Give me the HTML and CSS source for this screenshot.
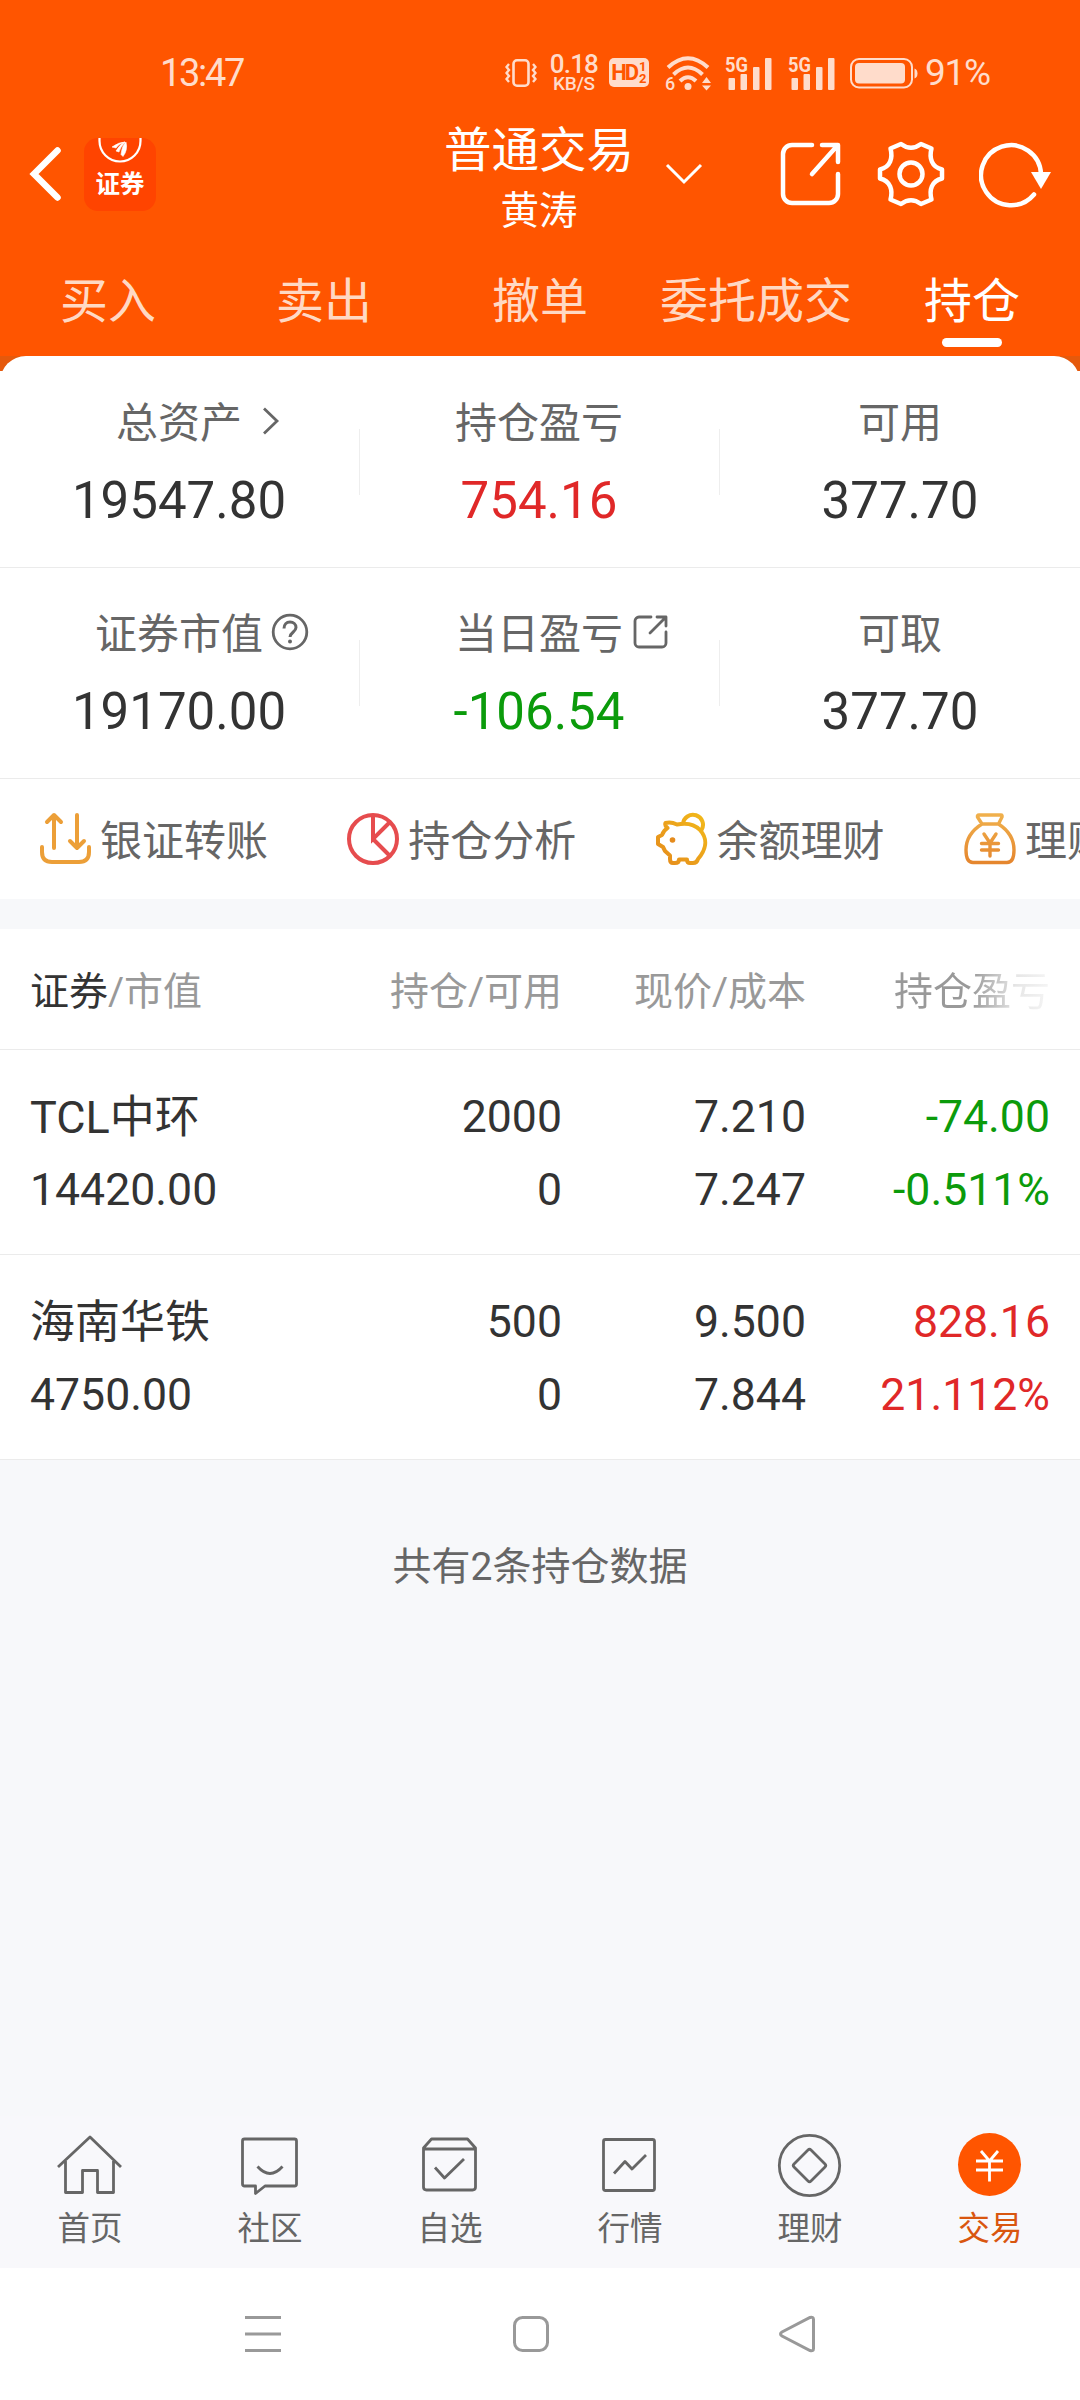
FILE: index.html
```html
<!DOCTYPE html>
<html lang="zh-CN">
<head>
<meta charset="utf-8">
<title>普通交易 - 持仓</title>
<link rel="stylesheet" href="styles.css">
</head>
<body>
<div class="screen">
  <header class="header">
    <div class="status">
      <span class="time">13:47</span>
      <div class="status-icons">
        <svg class="s-vibrate" width="32" height="30" viewBox="0 0 32 30" fill="none" stroke="currentColor" stroke-width="2.6"><rect x="8.5" y="2.3" width="15" height="25.4" rx="3.5"/><path d="M4 6l-2.5 3L4 12l-2.5 3L4 18l-2.500 3L4 24M28 6l2.500 3L28 12l2.500 3L28 18l2.500 3L28 24" stroke-width="2.400"/></svg>
        <div class="speed"><span class="speed-num">0.18</span><span class="speed-unit">KB/S</span></div>
        <div class="hd"><span class="hd-label">HD</span><span class="hd-nums"><i>1</i><i>2</i></span></div>
        <svg class="s-wifi" width="48" height="36" viewBox="0 0 48 36"><g fill="none" stroke="currentColor" stroke-width="4"><path d="M3 12.500Q23 -6 43 12.500"/><path d="M8.500 19.500Q23 5.500 37.500 19.500"/><path d="M15 26Q23 18.500 31 26"/></g><circle cx="23" cy="31.500" r="3.500" fill="currentColor"/><path d="M37 28l4.500-6 4.500 6zM37 30.500l4.500 5 4.500-5z" fill="currentColor"/><text x="0" y="35" class="wifi-gen" fill="currentColor">6</text></svg>
        <svg class="s-signal" width="47" height="34" viewBox="0 0 47 34" fill="currentColor"><text x="0" y="15.500" class="net-gen" textLength="23" lengthAdjust="spacingAndGlyphs">5G</text><rect x="3.500" y="22" width="6.500" height="12" rx="1"/><rect x="15.500" y="18" width="6.500" height="16" rx="1"/><rect x="28" y="11" width="6.500" height="23" rx="1"/><rect x="40" y="2" width="6.500" height="32" rx="1"/></svg>
        <svg class="s-signal2" width="47" height="34" viewBox="0 0 47 34" fill="currentColor"><text x="0" y="15.500" class="net-gen" textLength="23" lengthAdjust="spacingAndGlyphs">5G</text><rect x="3.500" y="22" width="6.500" height="12" rx="1"/><rect x="15.500" y="18" width="6.500" height="16" rx="1"/><rect x="28" y="11" width="6.500" height="23" rx="1"/><rect x="40" y="2" width="6.500" height="32" rx="1"/></svg>
        <svg class="s-battery" width="68" height="32" viewBox="0 0 68 32"><rect x="1" y="2" width="61" height="28.500" rx="8" fill="none" stroke="currentColor" stroke-width="2"/><rect x="5" y="6" width="50" height="20.500" rx="4" fill="currentColor"/><path d="M64.500 11.500q3 1 3 5t-3 5z" fill="currentColor"/></svg>
        <span class="percent">91%</span>
      </div>
    </div>
    <div class="titlebar">
      <svg class="back" width="34" height="58" viewBox="0 0 34 58" fill="none" stroke="#fff" stroke-width="6.500" stroke-linecap="round" stroke-linejoin="miter"><path d="M29.500 5.500L6 29 29.500 52.500"/></svg>
      <div class="logo">
        <svg width="72" height="26" viewBox="0 0 72 26"><path d="M15.500 0v3a20.500 20.500 0 0 0 41 0V0" fill="none" stroke="#fff" stroke-width="2.200"/><path d="M28 9q7-5 13-5-7 2-9 6zM32 13q4-7 9-9-5 6-6 10zM37 16.500q1-9 5-12.500 2 8-3 14.500z" fill="#fff" stroke="#fff" stroke-width=".6"/></svg>
        <span>证券</span>
      </div>
      <div class="title">
        <span class="title-main">普通交易</span>
        <span class="title-user">黄涛</span>
      </div>
      <svg class="drop" width="40" height="24" viewBox="0 0 40 24" fill="none" stroke="#fff" stroke-width="3"><path d="M3 3l17 17L37 3"/></svg>
      <svg class="act-share" width="62" height="66" viewBox="0 0 62 66" fill="none" stroke="#fff" stroke-width="4.500" stroke-linecap="round" stroke-linejoin="round"><path d="M32 4H12a9 9 0 0 0-9 9v40a9 9 0 0 0 9 9h37a9 9 0 0 0 9-9V33M42 4h16v17M57 5L32 33"/></svg>
      <svg class="act-gear" width="70" height="70" viewBox="0 0 70 70" fill="none" stroke="#fff" stroke-width="4.500" stroke-linejoin="round"><path d="M25 5Q35 12.500 45 5L55.500 9.500C53 19 55.500 28 66 30.500V39.500C55.500 42 53 51 55.500 60.500L45 65Q35 57.500 25 65L14.500 60.500C17 51 14.500 42 4 39.500V30.500C14.500 28 17 19 14.500 9.500Z"/><circle cx="35" cy="35" r="11.500"/></svg>
      <svg class="act-refresh" width="74" height="68" viewBox="0 0 74 68"><path d="M55 54.500A30 30 0 1 1 62 34" fill="none" stroke="#fff" stroke-width="4.500" stroke-linecap="round"/><path d="M52 32h20L62 49z" fill="#fff"/></svg>
    </div>
    <nav class="tabs">
      <span class="tab">买入</span><span class="tab">卖出</span><span class="tab">撤单</span><span class="tab">委托成交</span><span class="tab tab-on">持仓</span>
    </nav>
  </header>

  <section class="assets">
    <div class="asset-row asset-row-first">
      <div class="asset"><div class="label">总资产<svg class="label-chevron" width="18" height="30" viewBox="0 0 18 30" fill="none" stroke="currentColor" stroke-width="2.800"><path d="M2 2.500L15 15 2 27.500"/></svg></div><div class="value">19547.80</div></div>
      <div class="asset"><div class="label">持仓盈亏</div><div class="value up">754.16</div></div>
      <div class="asset"><div class="label">可用</div><div class="value">377.70</div></div>
    </div>
    <div class="asset-row">
      <div class="asset"><div class="label">证券市值<svg class="label-help" width="38" height="38" viewBox="0 0 38 38" fill="none" stroke="currentColor" stroke-width="2.800"><circle cx="19" cy="19" r="16.800"/><path d="M13 15.500c0-4 2.500-6.500 6-6.500s6 2.300 6 5.500c0 4.500-6 5-6 9.500" stroke-width="3"/><circle cx="19" cy="28.500" r="2" fill="currentColor" stroke="none"/></svg></div><div class="value">19170.00</div></div>
      <div class="asset"><div class="label">当日盈亏<svg class="label-share" width="36" height="36" viewBox="0 0 36 36" fill="none" stroke="currentColor" stroke-width="2.800" stroke-linecap="round" stroke-linejoin="round"><path d="M18 3H6a4 4 0 0 0-4 4v22a4 4 0 0 0 4 4h23a4 4 0 0 0 4-4V18M24 3h9v9M33 3L17 19"/></svg></div><div class="value down">-106.54</div></div>
      <div class="asset"><div class="label">可取</div><div class="value">377.70</div></div>
    </div>
  </section>

  <section class="shortcuts">
    <div class="shortcut"><svg width="54" height="54" viewBox="0 0 54 54" fill="none" stroke="#ec9f38" stroke-width="4" stroke-linecap="round" stroke-linejoin="round"><path d="M4 35v5q0 10 10 10h27q10 0 10-10v-5M16 36V3M9 10l7-7 7 7M39 3v33M32 29l7 7 7-7"/></svg><span>银证转账</span></div>
    <div class="shortcut"><svg width="54" height="54" viewBox="0 0 54 54" fill="none" stroke="#e64c4e" stroke-width="4"><circle cx="27" cy="27" r="24"/><path d="M27 3v24l17-17M27 27l17 17"/></svg><span>持仓分析</span></div>
    <div class="shortcut"><svg width="54" height="54" viewBox="0 0 54 54" fill="none" stroke="url(#pig)" stroke-width="4" stroke-linejoin="round"><defs><linearGradient id="pig" x1="0" y1="1" x2="1" y2="0"><stop offset="0" stop-color="#e58b1c"/><stop offset="1" stop-color="#f2b91a"/></linearGradient></defs><path d="M10.500 11Q16 9.500 22 12.500 37 9.500 45 18C54 28 50 39 43 47Q42 51 38 51H35Q32 51 32 47.500H24Q24 51 20 51H18Q15 51 15 47V43.500L10 39 8 35 3 32V25L7 23Q9 18 12.500 16Q9.500 14 10.500 11ZM28 12A10 10 0 1 1 46.500 18"/><circle cx="17.500" cy="28" r="2.800" fill="#e58b1c" stroke="none"/></svg><span>余额理财</span></div>
    <div class="shortcut"><svg width="54" height="54" viewBox="0 0 54 54" fill="none" stroke="url(#bag)" stroke-width="3.400" stroke-linecap="round" stroke-linejoin="round"><defs><linearGradient id="bag" x1="0" y1="1" x2="0" y2="0"><stop offset="0" stop-color="#e5862e"/><stop offset="1" stop-color="#f0b04c"/></linearGradient></defs><path d="M16 3H38Q39.500 3 39 5L35.500 12H19L14.500 5Q14 3 16 3ZM19 12Q3 22 3 38 3 50.500 10 50.500H44Q51 50.500 51 38 51 22 35.500 12M21 22l6 9 6-9M18.500 31.500h17M18.500 38h17M27 31v13"/></svg><span>理财产品</span></div>
  </section>

  <section class="holdings">
    <div class="grid head"><div><b>证券</b>/市值</div><div>持仓/可用</div><div>现价/成本</div><div class="head-fade">持仓盈亏</div></div>
    <div class="grid row">
      <div><span class="name">TCL中环</span><br>14420.00</div><div>2000<br>0</div><div>7.210<br>7.247</div><div class="down">-74.00<br>-0.511%</div>
    </div>
    <div class="grid row">
      <div><span class="name">海南华铁</span><br>4750.00</div><div>500<br>0</div><div>9.500<br>7.844</div><div class="up">828.16<br>21.112%</div>
    </div>
  </section>
  <p class="summary">共有2条持仓数据</p>

  <nav class="bottom">
    <div class="item"><svg width="72" height="72" viewBox="0 0 72 72"><path d="M4 38L36 8l31 30M11.500 32v31.500h17V41.500h15v22h16V32"/></svg><span>首页</span></div>
    <div class="item"><svg width="72" height="72" viewBox="0 0 72 72"><path d="M10.500 10h50q2 0 2 2V55q0 2-2 2H31l-9.500 7.500V57h-11q-2 0-2-2V12q0-2 2-2zM23.500 37.500q12.500 14 25 0"/></svg><span>社区</span></div>
    <div class="item"><svg width="72" height="72" viewBox="0 0 72 72"><path d="M9.500 19l8-9h36l8 9V58q0 3-3 3h-46q-3 0-3-3zM9.500 20h52M21 38.500l9.500 10.500L50 30"/></svg><span>自选</span></div>
    <div class="item"><svg width="72" height="72" viewBox="0 0 72 72"><rect x="9.500" y="10.500" width="51" height="51" rx="2"/><path d="M20 44.500l11-12 7 7.500L52 26"/></svg><span>行情</span></div>
    <div class="item"><svg width="72" height="72" viewBox="0 0 72 72"><circle cx="35.500" cy="36.500" r="30.200"/><path d="M34 21q1.500-1.500 3 0L51 35q1.500 1.500 0 3L37 52q-1.500 1.500-3 0L20 38q-1.500-1.500 0-3z"/></svg><span>理财</span></div>
    <div class="item item-on"><svg width="72" height="72" viewBox="0 0 72 72"><circle cx="35.500" cy="35.500" r="31.500" fill="#ff5500" stroke="none"/><path d="M27 22l8.500 10L44 22M22 32h27M22 41h27M35.500 32v20.500" stroke="#fff"/></svg><span>交易</span></div>
  </nav>
  <div class="sysnav">
    <svg width="40" height="40" viewBox="0 0 40 40"><path d="M2 3.500h36M2 20h36M2 36.500h36"/></svg>
    <svg width="40" height="40" viewBox="0 0 40 40"><rect x="4.500" y="3.500" width="33" height="33" rx="8"/></svg>
    <svg width="40" height="40" viewBox="0 0 40 40"><path d="M33 3.500q3.500-1 3.500 2v29q0 3-3.500 2L5 22q-3-2 0-4z"/></svg>
  </div>
</div>
</body>
</html>
```
FILE: styles.css
```css
* { box-sizing: border-box; }
body {
  margin: 0;
  background: #fff;
  font-family: Roboto, "Noto Sans CJK SC", sans-serif;
  font-weight: 400;
  color: #333;
}
svg { display: block; flex: none; }
.screen {
  width: 1080px;
  height: 2400px;
  display: flex;
  flex-direction: column;
  background: #f7f8fa;
  overflow: hidden;
}

/* header */
.header { height: 356px; background: #ff5500; color: #fff; flex: none; }
.status {
  height: 122px;
  padding: 23px 90px 0 160px;
  display: flex;
  justify-content: space-between;
  align-items: center;
  color: #ffdccb;
}
.time { font-size: 38px; letter-spacing: -2.3px; }
.status-icons { display: flex; align-items: center; }
.speed { margin-left: 13px; width: 48px; display: flex; flex-direction: column; align-items: center; font-weight: 500; }
.speed-num { font-size: 26px; line-height: 22px; letter-spacing: -0.8px; }
.speed-unit { font-size: 19px; line-height: 18px; letter-spacing: -0.3px; }
.hd {
  margin-left: 11px;
  width: 40px;
  height: 29px;
  border-radius: 5px;
  background: #ffdccb;
  color: #ff5500;
  display: flex;
  align-items: center;
  justify-content: center;
  font-weight: 700;
}
.hd-label { font-size: 22px; letter-spacing: -2px; }
.hd-nums { display: flex; flex-direction: column; margin-left: 2px; }
.hd-nums i { font-style: normal; font-size: 13px; line-height: 12px; }
.s-wifi, .s-signal, .s-signal2 { overflow: visible; }
.s-wifi { margin-left: 16px; }
.wifi-gen { font-size: 18px; font-weight: 500; }
.net-gen { font-size: 21px; font-weight: 700; }
.s-signal { margin-left: 12px; }
.s-signal2 { margin-left: 16px; }
.s-battery { margin-left: 15px; }
.percent { margin-left: 7px; font-size: 37px; letter-spacing: -1.2px; }

.titlebar { height: 122px; display: flex; align-items: center; }
.back { margin: -18px 0 0 28px; }
.logo {
  margin: -18px 0 0 22px;
  width: 72px;
  height: 73px;
  border-radius: 14px;
  background: #ff4400;
  display: flex;
  flex-direction: column;
  align-items: center;
  font: 700 24.5px/38px "Noto Sans CJK SC", sans-serif;
}
.title { margin: -4px 0 0 248px; width: 270px; display: flex; flex-direction: column; align-items: center; }
.title-main { font-size: 47.5px; line-height: 59px; }
.title-user { font-size: 38.5px; line-height: 59px; }
.drop { margin-left: -10px; margin-top: -19px; }
.act-share { margin: -18px 0 0 76px; }
.act-gear { margin: -18px 0 0 34px; }
.act-refresh { margin: -18px 0 0 33px; }

.tabs { display: grid; grid-template-columns: repeat(5, 216px); height: 112px; }
.tab {
  display: flex;
  flex-direction: column;
  align-items: center;
  font-size: 48px;
  line-height: 64px;
  padding-top: 26px;
  color: #ffd9c4;
}
.tab-on { color: #fff; }
.tab-on::after { content: ""; width: 60px; height: 9px; margin-top: 4px; border-radius: 4.5px; background: #fff; }

/* asset summary */
.assets { background: linear-gradient(#e5590c 15px, #fff 15px); flex: none; }
.asset-row {
  display: grid;
  grid-template-columns: repeat(3, 1fr);
  height: 211px;
  border-bottom: 1px solid #ebebeb;
  background: #fff;
}
.asset-row-first { height: 212px; padding-top: 1px; border-radius: 26px 26px 0 0; }
.asset {
  display: flex;
  flex-direction: column;
  align-items: center;
  padding: 37px 2px 0 0;
  background: linear-gradient(#eee, #eee) right 72px / 1px 66px no-repeat;
}
.asset:last-child { background: none; padding-right: 0; }
.label { display: flex; align-items: center; font-size: 42px; line-height: 60px; color: #666; }
.label-chevron { margin: -6px -38px 0 20px; }
.label-help { margin: -6px -46px 0 8px; }
.label-share { margin: -6px -46px 0 10px; }
.value { font-size: 51px; line-height: 60px; margin-top: 17px; }
.up { color: #e02828; }
.down { color: #0b9b0b; }

/* shortcuts */
.shortcuts { display: flex; height: 120px; background: #fff; padding-left: 38px; overflow: hidden; flex: none; }
.shortcut { display: flex; align-items: center; flex: 0 0 308.3px; font-size: 42px; color: #666; white-space: nowrap; }
.shortcut span { margin: -3px 0 0 8px; }
.shortcut svg { margin-top: -1px; }

/* holdings */
.holdings { margin-top: 30px; background: #fff; flex: none; }
.grid { display: grid; grid-template-columns: 288px 244px 244px 244px; padding: 0 30px; text-align: right; border-bottom: 1px solid #ebebeb; }
.grid > :first-child { text-align: left; white-space: nowrap; }
.head { height: 121px; align-items: center; padding-bottom: 3px; font-size: 39px; color: #999; }
.head b { font-weight: 400; color: #333; }
.head-fade {
  background: linear-gradient(90deg, #999 165px, #e6e6e6 210px, #f5f5f5);
  -webkit-background-clip: text;
  background-clip: text;
  color: transparent;
}
.row { height: 205px; padding-top: 31px; font-size: 44.6px; line-height: 73px; }
.name { position: relative; top: 1px; font-size: 45px; line-height: 1; }
.summary { margin: 77px 0 0; text-align: center; font-size: 39px; line-height: 60px; color: #666; }

/* bottom navigation */
.bottom { margin-top: auto; height: 152px; padding-top: 13px; display: grid; grid-template-columns: repeat(6, 180px); background: #f8f8fb; flex: none; }
.item { display: flex; flex-direction: column; align-items: center; color: #666; font-size: 32.5px; line-height: 40px; }
.item svg { fill: none; stroke: #666; stroke-width: 2.8; stroke-linejoin: round; }
.item span { margin-top: 8px; }
.item-on { color: #d9560f; }
.sysnav { height: 132px; flex: none; background: #fff; display: flex; gap: 227px; padding: 46px 0 0 243px; }
.sysnav svg { fill: none; stroke: #999; stroke-width: 3; }
```
